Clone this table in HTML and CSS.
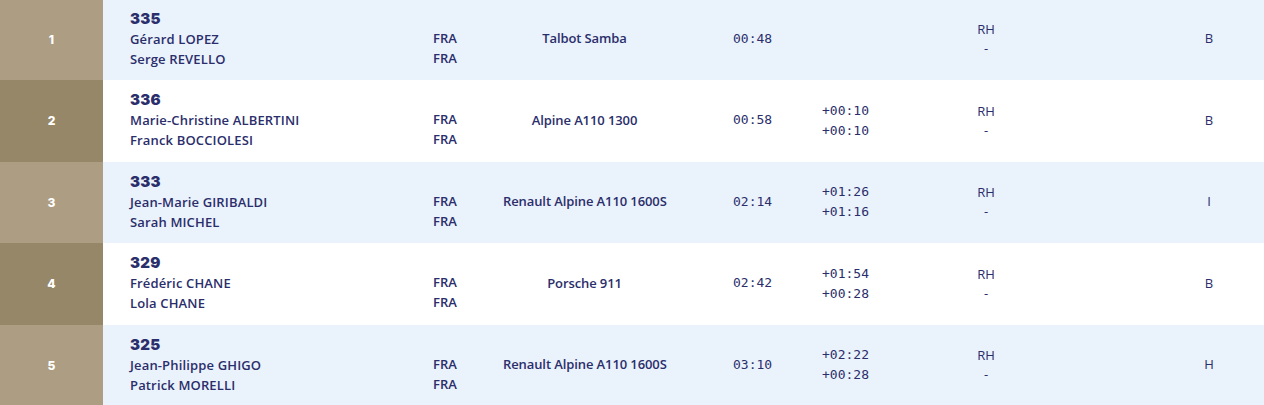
FILE: index.html
```html
<!DOCTYPE html>
<html lang="fr">
<head>
<meta charset="utf-8">
<title>Classement</title>
<link rel="stylesheet" href="styles.css">
</head>
<body>
<div class="table">
  <div class="row odd">
    <div class="pos">1</div>
    <div class="crew"><div class="num">335</div><div>Gérard LOPEZ</div><div>Serge REVELLO</div></div>
    <div class="nat"><div></div><div>FRA</div><div>FRA</div></div>
    <div class="car">Talbot Samba</div>
    <div class="time">00:48</div>
    <div class="diff"></div>
    <div class="grp"><div>RH</div><div>-</div></div>
    <div class="cls">B</div>
  </div>
  <div class="row even">
    <div class="pos">2</div>
    <div class="crew"><div class="num">336</div><div>Marie-Christine ALBERTINI</div><div>Franck BOCCIOLESI</div></div>
    <div class="nat"><div></div><div>FRA</div><div>FRA</div></div>
    <div class="car">Alpine A110 1300</div>
    <div class="time">00:58</div>
    <div class="diff"><div>+00:10</div><div>+00:10</div></div>
    <div class="grp"><div>RH</div><div>-</div></div>
    <div class="cls">B</div>
  </div>
  <div class="row odd">
    <div class="pos">3</div>
    <div class="crew"><div class="num">333</div><div>Jean-Marie GIRIBALDI</div><div>Sarah MICHEL</div></div>
    <div class="nat"><div></div><div>FRA</div><div>FRA</div></div>
    <div class="car">Renault Alpine A110 1600S</div>
    <div class="time">02:14</div>
    <div class="diff"><div>+01:26</div><div>+01:16</div></div>
    <div class="grp"><div>RH</div><div>-</div></div>
    <div class="cls">I</div>
  </div>
  <div class="row even">
    <div class="pos">4</div>
    <div class="crew"><div class="num">329</div><div>Frédéric CHANE</div><div>Lola CHANE</div></div>
    <div class="nat"><div></div><div>FRA</div><div>FRA</div></div>
    <div class="car">Porsche 911</div>
    <div class="time">02:42</div>
    <div class="diff"><div>+01:54</div><div>+00:28</div></div>
    <div class="grp"><div>RH</div><div>-</div></div>
    <div class="cls">B</div>
  </div>
  <div class="row odd">
    <div class="pos">5</div>
    <div class="crew"><div class="num">325</div><div>Jean-Philippe GHIGO</div><div>Patrick MORELLI</div></div>
    <div class="nat"><div></div><div>FRA</div><div>FRA</div></div>
    <div class="car">Renault Alpine A110 1600S</div>
    <div class="time">03:10</div>
    <div class="diff"><div>+02:22</div><div>+00:28</div></div>
    <div class="grp"><div>RH</div><div>-</div></div>
    <div class="cls">H</div>
  </div>
</div>
</body>
</html>
```
FILE: styles.css
```css
html, body {
  margin: 0;
  padding: 0;
  background: #ffffff;
}
body {
  font-family: "Open Sans", "Liberation Sans", sans-serif;
  color: #2a2e6b;
  overflow: hidden;
}
.table {
  display: flex;
  flex-direction: column;
  margin-top: -1.5px;
}
.row {
  display: grid;
  grid-template-columns: 103px 330px 70px 163px 156px 100px 128px 1fr;
  height: 81.5px;
  align-items: center;
  font-size: 13px;
  font-weight: 600;
}
.row.odd { background: #eaf2fc; }
.row.even { background: #ffffff; }
.pos {
  align-self: stretch;
  display: flex;
  align-items: center;
  justify-content: center;
  color: #ffffff;
  font-family: "Inter", sans-serif;
  font-weight: 800;
  font-size: 12px;
}
.odd .pos { background: #ad9d82; }
.even .pos { background: #978769; }
.crew, .nat {
  display: flex;
  flex-direction: column;
  line-height: 20px;
}
.crew {
  padding-left: 27px;
  letter-spacing: 0.15px;
}
.nat { margin-top: -3px; }
.num {
  font-family: "Inter", sans-serif;
  font-weight: 900;
  font-size: 15px;
  letter-spacing: 0.2px;
  margin-top: -1px;
}
.nat div { min-height: 20px; }
.car {
  text-align: center;
  white-space: nowrap;
  font-weight: 600;
  letter-spacing: -0.1px;
  margin-top: -2px;
}
.time {
  padding-left: 67px;
  font-family: "DejaVu Sans Mono", monospace;
  font-weight: 400;
  margin-top: -2px;
}
.diff {
  font-family: "DejaVu Sans Mono", monospace;
  font-weight: 400;
  line-height: 20px;
}
.grp {
  text-align: center;
  line-height: 19px;
  font-weight: 500;
}
.cls {
  padding-left: 104px;
  width: 110px;
  text-align: center;
  font-weight: 500;
  margin-top: -2px;
}
```
